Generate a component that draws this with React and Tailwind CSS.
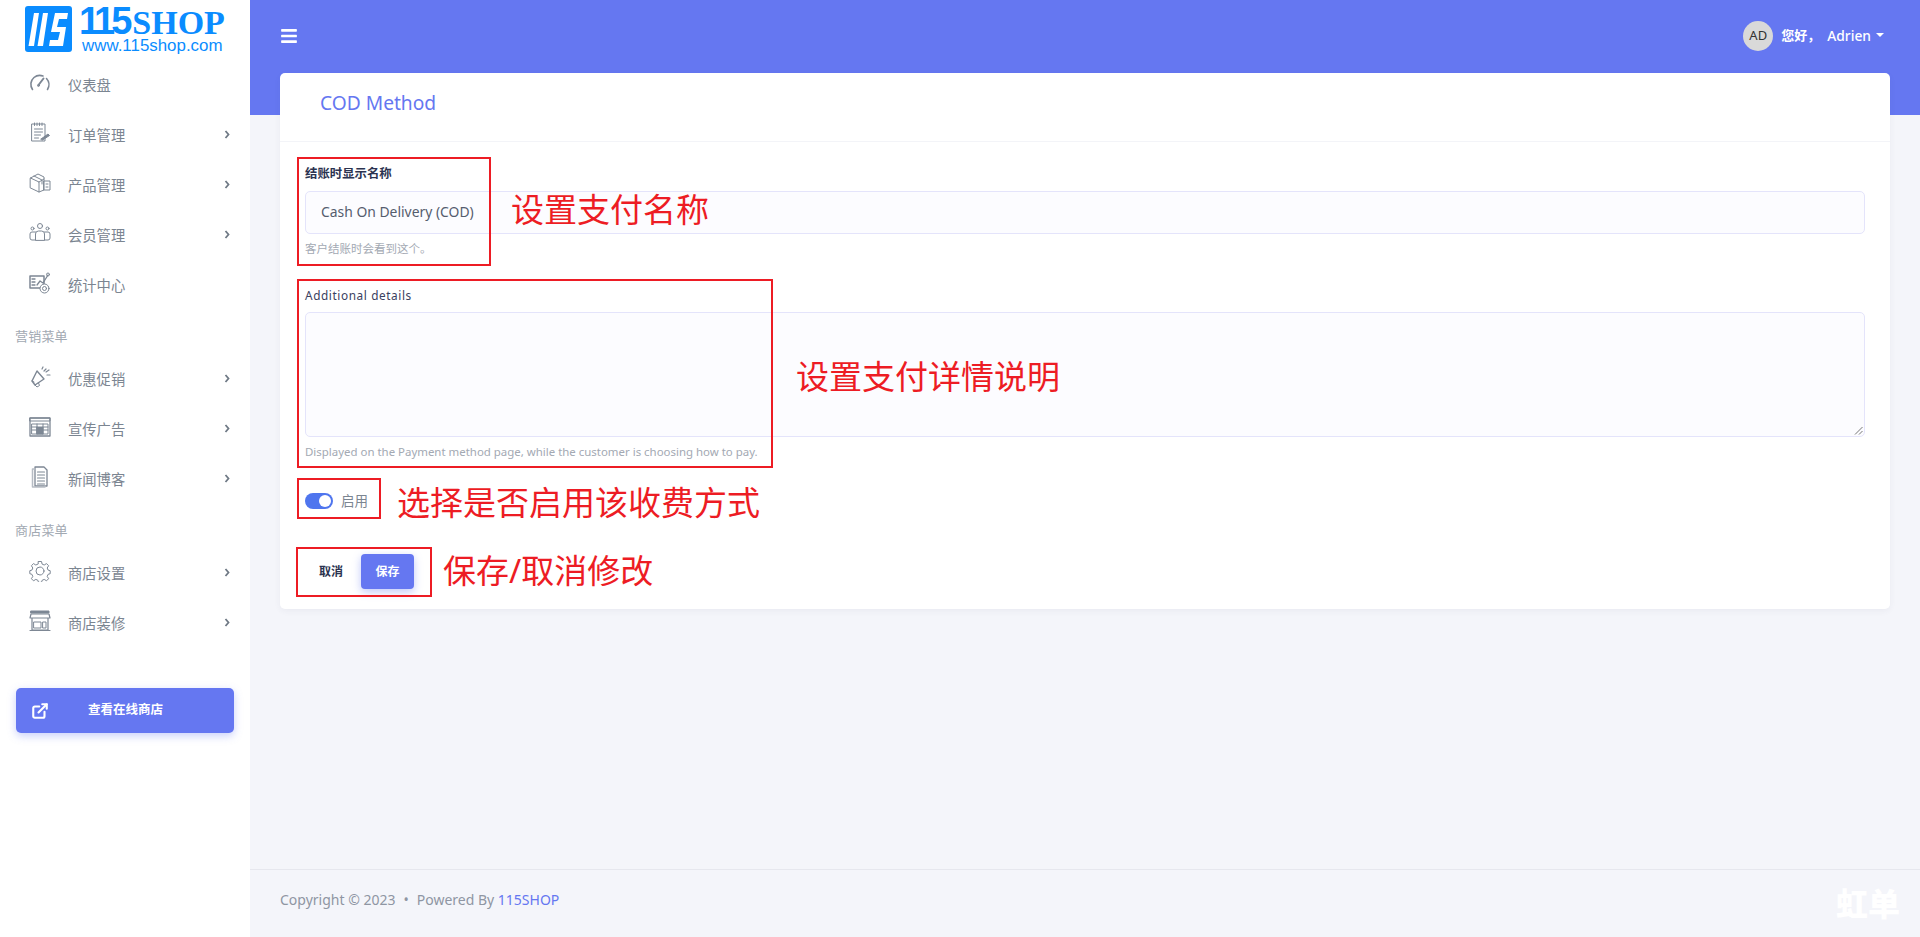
import React from "react";
import { FaBars } from "react-icons/fa";
import { FiExternalLink } from "react-icons/fi";

const sans = { fontFamily: '"Noto Sans","Noto Sans CJK SC",sans-serif' };

const S = ({ children }) => (
  <svg width="22" height="22" viewBox="0 0 22 22" fill="none" stroke="#7d8794" strokeWidth="1" strokeLinecap="round" strokeLinejoin="round">{children}</svg>
);
const icons = {
  gauge: <S><path d="M3.500 17.500A9 9 0 0 1 5 5.500a9 9 0 0 1 9-1.500M17.500 6.500a9 9 0 0 1 1 11" strokeWidth="1.600"/><path d="M9.500 13l5-6.500" strokeWidth="2"/><circle cx="9.500" cy="13.500" r="1" /></S>,
  order: <S><path d="M3 2h13v17H3z"/><path d="M5.500 1v2.500M8 1v2.500M10.500 1v2.500M13 1v2.500M5.500 7h8M5.500 10h8M5.500 13h6M5.500 16h4"/><path d="M12 17l7-5 1.500 1.500-7 4.500z" fill="#7d8794"/></S>,
  box: <S><path d="M1.500 6L9 2l6 3v13l-5 2-8.500-4z"/><path d="M1.500 6L10 10v10M10 10l5-3M5 4l8 4v4"/><path d="M15 9h6v9h-6zM17 12h2M17 15h2"/></S>,
  users: <S><circle cx="11" cy="4" r="2.500"/><circle cx="3.500" cy="6.500" r="1.500"/><circle cx="18.500" cy="6.500" r="1.500"/><path d="M6.500 18v-6a3 3 0 0 1 3-3h3a3 3 0 0 1 3 3v6zM6.500 10H3a2 2 0 0 0-2 2v4a2 2 0 0 0 2 2h3.500M15.500 10H19a2 2 0 0 1 2 2v4a2 2 0 0 1-2 2h-3.500"/></S>,
  stats: <S><path d="M1 4h14v12H1z" strokeWidth="1.500"/><path d="M3 7h3M3 10h3M3 13h3M8 13l3-4 3 2 5-8" strokeWidth="1.300"/><circle cx="19" cy="2.500" r="1.500"/><circle cx="15.500" cy="16.500" r="4.500" fill="#fff"/><circle cx="15.500" cy="16.500" r="2"/></S>,
  megaphone: <S><path d="M8 5l7 8-9 6-3-4z" strokeWidth="1.400"/><path d="M6 19l2 2 2.500-1.500-1-2.500M5 16l-2-1"/><path d="M13 3l1-2M17 6l3-2M18 9h3M15 5l2-2" strokeWidth="1.200"/></S>,
  ad: <S><path d="M1 2h20v18H1z" strokeWidth="1.300"/><path d="M1 2h20v3H1z"/><path d="M3 8h16v10H3z"/><path d="M8 8v10M14 8v10M3 11h5M14 11h5M3 14h5M14 14h5"/><path d="M8 11h6v7H8z" fill="#7d8794"/></S>,
  news: <S><path d="M6 1h9l3 3v16H6z" strokeWidth="1.300"/><path d="M6 3H3.500v18H16v-1" strokeWidth="1.500" stroke="#b6bcc4"/><path d="M8.500 6h7M8.500 9h7M8.500 12h7M8.500 15h7M8.500 18h7" strokeWidth="1.200"/></S>,
  gear: <S><circle cx="11" cy="11" r="4"/><path d="M9.500 1.500h3l.6 2.600 2.100.9 2.300-1.400 2.100 2.100-1.400 2.300.9 2.100 2.100.6v3l-2.100.6-.9 2.100 1.400 2.300-2.100 2.100-2.300-1.400-2.100.9-.6 2.100h-3l-.6-2.100-2.100-.9-2.300 1.400-2.100-2.100 1.400-2.300-.9-2.100-2.100-.6v-3l2.100-.6.9-2.100-1.400-2.300 2.100-2.100 2.300 1.400 2.100-.9z"/></S>,
  store: <S><path d="M2 1h18v2H2z" fill="#7d8794"/><path d="M2 4l-1 4h20l-1-4zM3 8v12h16V8M1 20.500h20" strokeWidth="1.200"/><path d="M5 12h7v6H5zM14 12h3v6h-3z"/></S>,
};

function Chevron() {
  return (
    <svg width="7" height="9" viewBox="0 0 7 9" className="absolute left-[224px] top-[6px]">
      <path d="M1.500 1l3 3.500-3 3.500" stroke="#6f7985" strokeWidth="1.800" fill="none" />
    </svg>
  );
}

function NavItem({ icon, label, arrow }) {
  return (
    <div className="relative flex h-[50px] items-start pl-[29px]">
      <span className="mt-[-2px] flex h-[22px] w-[22px] shrink-0 items-center justify-center">{icons[icon]}</span>
      <span className="ml-[17px] mt-[1px] text-[14.300px] leading-[22px] text-[#7b8591]">{label}</span>
      {arrow && <Chevron />}
    </div>
  );
}

function Section({ children }) {
  return <div className="flex h-[36px] items-start pl-[15px] text-[13px] leading-[18px] tracking-[0.2px] text-[#a2a9b2]">{children}</div>;
}

function Sidebar() {
  return (
    <aside className="flex h-[937px] w-[250px] shrink-0 flex-col bg-white" style={sans}>
      <div className="flex h-[74px] items-start gap-[7px] pl-[25px] pt-[6px]">
        <svg width="47" height="46" viewBox="0 0 47 46">
          <rect width="47" height="46" rx="3" fill="#0a8cff" />
          <path d="M9 7h5L9 40H3.500zM18 7h5l-5 33h-5.500z" fill="#fff" />
          <path d="M30 7h13l-1 6H34l-2 8h9l-3 19H24l1-6h8l2-8h-9z" fill="#fff" />
        </svg>
        <div className="flex flex-col">
          <div className="flex h-[30px] items-baseline text-[#0a8cff]">
            <span className="text-[38px] font-bold leading-[30px] tracking-[-4px]" style={{ fontFamily: '"Liberation Sans",sans-serif' }}>115</span>
            <span className="ml-[4px] text-[34px] font-bold leading-[30px]" style={{ fontFamily: '"Liberation Serif",serif' }}>SHOP</span>
          </div>
          <div className="ml-[3px] mt-[2px] text-[16.900px] leading-[15px] text-[#0a8cff]" style={{ fontFamily: '"Liberation Sans",sans-serif' }}>www.115shop.com</div>
        </div>
      </div>
      <NavItem icon="gauge" label="仪表盘" />
      <NavItem icon="order" label="订单管理" arrow />
      <NavItem icon="box" label="产品管理" arrow />
      <NavItem icon="users" label="会员管理" arrow />
      <NavItem icon="stats" label="统计中心" />
      <div className="mt-[3px]"><Section>营销菜单</Section></div>
      <div className="mt-[5px]">
        <NavItem icon="megaphone" label="优惠促销" arrow />
        <NavItem icon="ad" label="宣传广告" arrow />
        <NavItem icon="news" label="新闻博客" arrow />
      </div>
      <div className="mt-[3px]"><Section>商店菜单</Section></div>
      <div className="mt-[5px]">
        <NavItem icon="gear" label="商店设置" arrow />
        <NavItem icon="store" label="商店装修" arrow />
      </div>
      <div className="mx-[16px] mt-[26px] flex h-[45px] items-center rounded-[5px] bg-[#6577f1] pl-[15px] shadow-[0_3px_8px_rgba(101,119,241,0.35)]">
        <FiExternalLink className="text-white" size={18} strokeWidth={2.800} />
        <span className="ml-[39px] text-[12.500px] font-bold text-white">查看在线商店</span>
      </div>
    </aside>
  );
}

const Red = ({ className }) => <div className={"pointer-events-none absolute border-2 border-[#ed1c24] " + className} />;
const Note = ({ className, children }) => (
  <div className={"pointer-events-none absolute whitespace-nowrap text-[33px] leading-[40px] text-[#ed1c24] " + className}>{children}</div>
);

function Card() {
  return (
    <div className="relative mx-[30px] mt-[-42px] h-[536px] rounded-[5px] bg-white shadow-[0_2px_6px_rgba(60,70,110,0.06)]">
      <div className="h-[69px] border-b border-[#f3f4f8] pl-[40px] pt-[16px] text-[19.200px] leading-[28px] text-[#6577f1]">COD Method</div>
      <div className="px-[25px]">
        <label className="mt-[24px] block text-[12.400px] font-bold leading-[16px] text-[#2b3350]">结账时显示名称</label>
        <div className="mt-[9px] flex h-[43px] items-center rounded-[5px] border border-[#e4e4fb] bg-[#fcfcff] pl-[15px] text-[13.900px] text-[#555d6e]">Cash On Delivery (COD)</div>
        <p className="mt-[7px] text-[11.500px] leading-[16px] text-[#a3a9b3]">客户结账时会看到这个。</p>
        <label className="mt-[30px] block text-[11.800px] leading-[16px] tracking-[0.6px] text-[#3a4160]">Additional details</label>
        <div className="relative mt-[9px] h-[125px] rounded-[5px] border border-[#e4e4fb] bg-[#fcfcff]">
          <svg width="9" height="9" viewBox="0 0 9 9" className="absolute bottom-[1px] right-[1px]">
            <path d="M8.500 1L1 8.500M8.500 5L5 8.500" stroke="#777" strokeWidth="1" />
          </svg>
        </div>
        <p className="mt-[7px] text-[11.450px] leading-[16px] text-[#a3a9b3]">Displayed on the Payment method page, while the customer is choosing how to pay.</p>
        <div className="mt-[33px] flex h-[16px] items-center">
          <div className="relative h-[16px] w-[28px] rounded-full bg-[#4f75ee]">
            <div className="absolute right-[2px] top-[2px] h-[12px] w-[12px] rounded-full bg-white" />
          </div>
          <span className="ml-[8px] text-[13.500px] text-[#7b8591]">启用</span>
        </div>
        <div className="mt-[45px] flex h-[35px] items-center">
          <span className="ml-[14px] text-[12px] font-bold text-[#2b3350]">取消</span>
          <div className="ml-[18px] flex h-[35px] w-[53px] items-center justify-center rounded-[4px] bg-[#6577f1] text-[12px] font-bold text-white shadow-[0_3px_8px_rgba(101,119,241,0.4)]">保存</div>
        </div>
      </div>
      <Red className="left-[17px] top-[84px] h-[109px] w-[194px]" />
      <Red className="left-[17px] top-[206px] h-[189px] w-[476px]" />
      <Red className="left-[17px] top-[405px] h-[41px] w-[84px]" />
      <Red className="left-[16px] top-[474px] h-[50px] w-[136px]" />
      <Note className="left-[231px] top-[117px]">设置支付名称</Note>
      <Note className="left-[516px] top-[284px]">设置支付详情说明</Note>
      <Note className="left-[117px] top-[410px]">选择是否启用该收费方式</Note>
      <Note className="left-[163px] top-[478px]">保存/取消修改</Note>
    </div>
  );
}

export default function App() {
  return (
    <div className="flex h-[937px] w-[1920px] overflow-hidden bg-[#f4f5fa]" style={sans}>
      <Sidebar />
      <main className="relative flex min-w-0 flex-1 flex-col">
        <header className="flex h-[115px] shrink-0 items-start justify-between bg-[#6577f1] pl-[30px] pr-[36px] pt-[21px]">
          <FaBars className="mt-[6px] text-white" size={18} />
          <div className="flex items-center">
            <div className="flex h-[30px] w-[30px] items-center justify-center rounded-full bg-[#d9d9d9] text-[13px] text-[#333]">AD</div>
            <span className="ml-[8px] text-[13px] font-bold text-white">您好，</span>
            <span className="ml-[7px] text-[13.800px] font-medium text-white">Adrien</span>
            <span className="ml-[5px] mt-[-3px] border-x-[4px] border-t-[4px] border-x-transparent border-t-white" />
          </div>
        </header>
        <Card />
        <footer className="mt-auto flex h-[68px] items-start border-t border-[#e6e7ee] pl-[30px] pt-[20px] text-[14px] leading-[20px] text-[#8f96a3]">
          <span>Copyright © 2023</span>
          <span className="mx-[8px]">•</span>
          <span>Powered By <span className="text-[#6577f1]">115SHOP</span></span>
        </footer>
        <div className="absolute bottom-[18px] right-[20px] text-[32px] font-black leading-[30px] text-white">虹单</div>
      </main>
    </div>
  );
}
